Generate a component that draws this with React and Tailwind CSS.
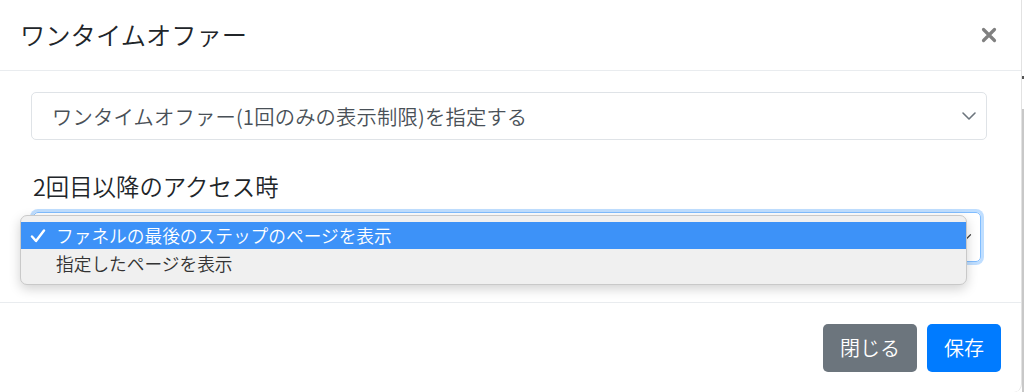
const FONT = { fontFamily: '"Noto Sans CJK JP", "Noto Sans", sans-serif' };

const Chevron = ({ className }) => (
  <svg viewBox="0 0 16 10" className={className} fill="none" stroke="currentColor" strokeWidth="1.6" strokeLinecap="round" strokeLinejoin="round">
    <path d="M2 2l6 6 6-6" />
  </svg>
);

const OPTIONS = ["ファネルの最後のステップのページを表示", "指定したページを表示"];

export default function App() {
  return (
    <div className="flex h-[392px] w-[1024px] overflow-hidden bg-white font-[350]" style={FONT}>
      <div className="flex w-[1022px] flex-col rounded-br-lg border-r border-[#e2e2e2] bg-white">
        {/* header */}
        <div className="flex h-[71px] items-center justify-between border-b border-[#e9ecef] pl-[20px] pr-[24px]">
          <h1 className="text-[25.3px] leading-none text-[#212529]">ワンタイムオファー</h1>
          <svg viewBox="0 0 16 16" className="h-[16px] w-[16px] text-[#808080]" stroke="currentColor" strokeWidth="3.2" strokeLinecap="round">
            <path d="M2.5 2.5l11 11M13.5 2.5l-11 11" />
          </svg>
        </div>

        {/* body */}
        <div className="flex flex-col pb-[40px] pl-[31px] pr-[34px] pt-[21px]">
          <div className="flex h-[48px] items-center justify-between rounded-[5px] border border-[#dfe3e7] pl-[20px] pr-[9px] text-[20.3px] text-[#495057]">
            <span className="leading-none tracking-[0.2px]">ワンタイムオファー(1回のみの表示制限)を指定する</span>
            <Chevron className="h-[10px] w-[16px] text-[#6c757d]" />
          </div>

          <label className="mt-[32px] pl-[2px] text-[23.4px] leading-[28px] text-[#212529]">2回目以降のアクセス時</label>

          <div className="relative mr-[6px] mt-[12px] ml-[2px]">
            <div className="flex h-[50px] items-center justify-end rounded-[5px] border border-[#80bdff] pr-[8px] shadow-[0_0_0_3px_rgba(0,123,255,0.25)]">
              <Chevron className="h-[8px] w-[12px] text-[#444]" />
            </div>

            {/* open dropdown */}
            <div className="absolute left-[-13px] top-[3px] w-[947px] overflow-hidden rounded-[7px] border border-[#c9c9c9] bg-[#f0f0f0] py-[6px] shadow-[0_4px_12px_rgba(0,0,0,0.18)]">
              {OPTIONS.map((o, i) => (
                <div
                  key={o}
                  className={
                    i === 0
                      ? "flex h-[27px] items-center bg-[#3d92f8] text-[17.7px] leading-none text-white"
                      : "flex h-[29px] items-center text-[17.7px] leading-none text-[#333]"
                  }
                >
                  <span className="flex w-[35px] items-center pl-[9px]">
                    {i === 0 && (
                      <svg viewBox="0 0 16 14" className="h-[14px] w-[16px]" fill="none" stroke="currentColor" strokeWidth="2.4" strokeLinecap="round" strokeLinejoin="round">
                        <path d="M2 7.5l4 4.5L14 1.5" />
                      </svg>
                    )}
                  </span>
                  <span>{o}</span>
                </div>
              ))}
            </div>
          </div>
        </div>

        {/* footer */}
        <div className="flex flex-1 items-start justify-end gap-[10px] border-t border-[#e9ecef] pr-[20px] pt-[21px]">
          <button className="flex h-[48px] w-[94px] items-center justify-center rounded-[5px] bg-[#6c757d] text-[20px] text-white">
            閉じる
          </button>
          <button className="flex h-[48px] w-[74px] items-center justify-center rounded-[5px] bg-[#007bff] text-[20px] text-white">
            保存
          </button>
        </div>
      </div>

      {/* page scrollbar edge */}
      <div className="flex w-[2px] flex-col">
        <div className="h-[76px] bg-white" />
        <div className="h-[3px] bg-[#555]" />
        <div className="h-[30px] bg-white" />
        <div className="flex-1 bg-[#c8c8c8]" />
      </div>
    </div>
  );
}
